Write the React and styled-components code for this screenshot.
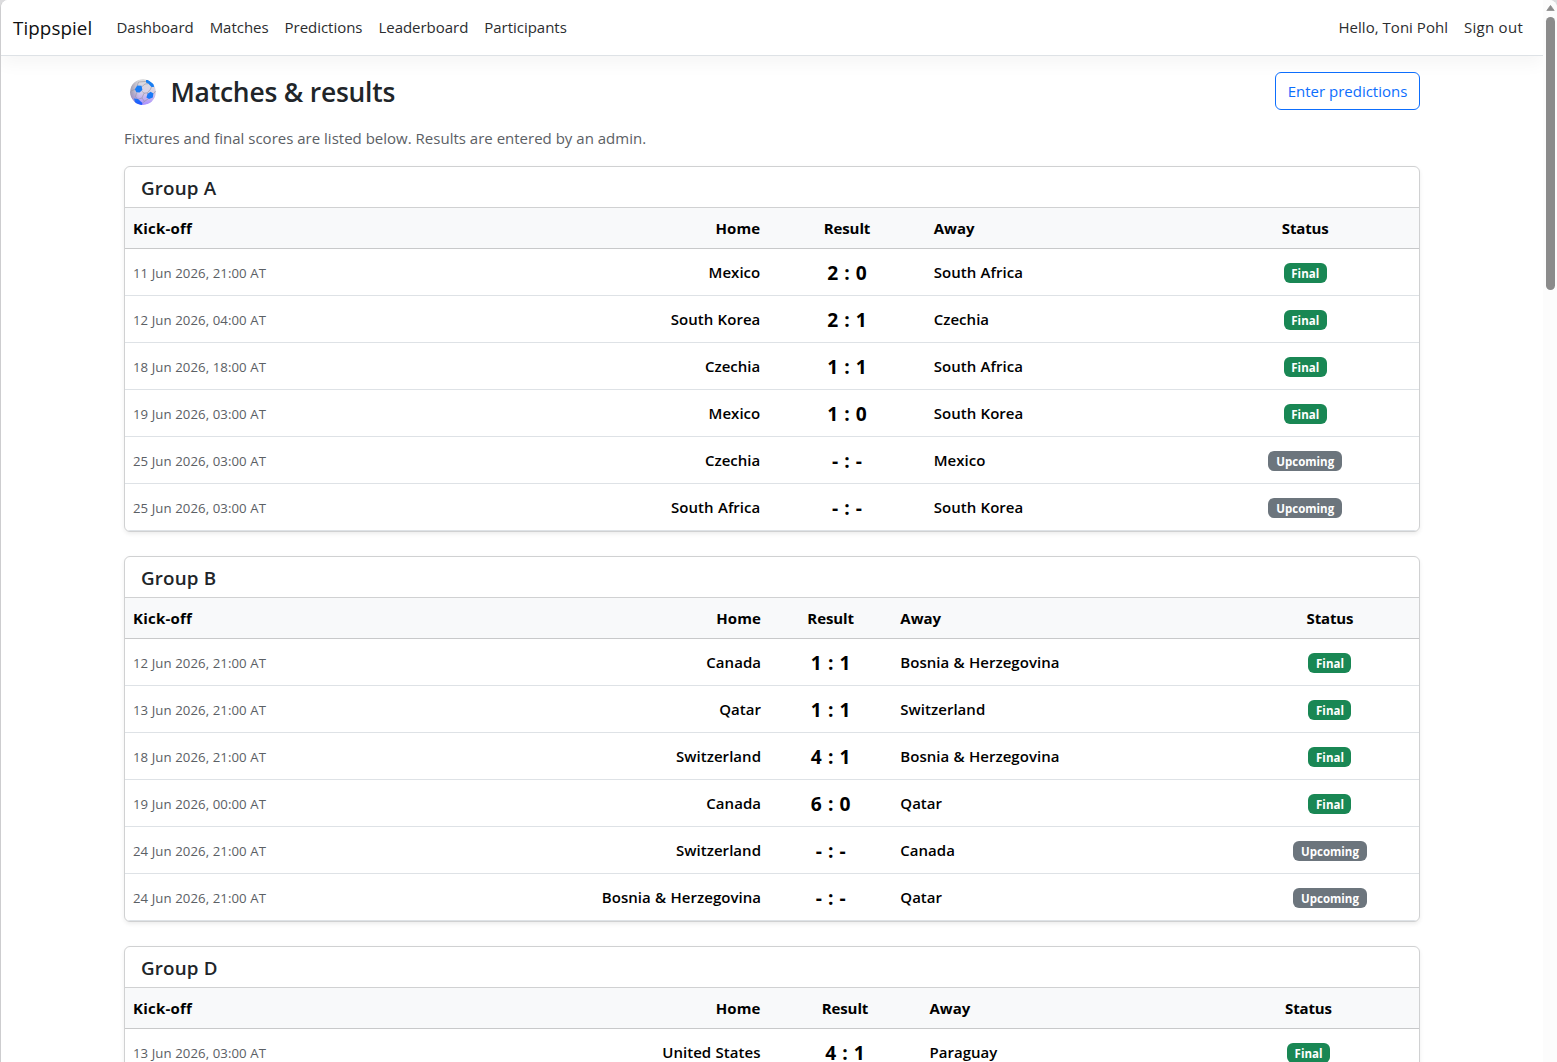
import React from "react";
import styled, { createGlobalStyle } from "styled-components";

const GlobalStyle = createGlobalStyle`
  *, *::before, *::after { box-sizing: border-box; }
  html, body { margin: 0; padding: 0; overflow: hidden; background: #dcdcde; }
  body {
    font-family: "Open Sans", "Noto Sans", sans-serif;
    font-size: 15px;
    line-height: 24px;
    color: #212529;
  }
`;

const Window = styled.div`
  display: flex;
  height: 1062px;
  overflow: hidden;
  background: #fff;
  border-left: 1px solid #cdcdcf;
  border-radius: 8px 8px 0 0;
`;

const Page = styled.div`
  flex: 1;
  min-width: 0;
  height: 1062px;
  overflow: hidden;
`;

const Navbar = styled.nav`
  display: flex;
  align-items: center;
  height: 56px;
  padding: 0 12px 2px;
  background: #fff;
  border-bottom: 1px solid #dee2e6;
  box-shadow: 0 8px 16px rgba(0, 0, 0, 0.04);
`;

const Brand = styled.a`
  margin-right: 16px;
  padding-top: 2px;
  width: 79.5px;
  font-size: 18.8px;
  line-height: 30px;
  letter-spacing: 0.08px;
  color: #0e0f10;
  white-space: nowrap;
`;

const NavLink = styled.a`
  padding: 0 8px;
  color: #2b2d2f;
  letter-spacing: ${(p) => p.$track ?? -0.03}px;
  white-space: nowrap;
`;

const NavEnd = styled.div`
  display: flex;
  margin-left: auto;
`;

const Container = styled.main`
  width: 1296px;
  margin: 16px 0 0 123px;
`;

const TitleBar = styled.div`
  display: flex;
  align-items: center;
  justify-content: space-between;
  height: 38px;
`;

const Title = styled.h1`
  display: flex;
  align-items: center;
  gap: 13.5px;
  margin: 0;
  padding: 1px 0 0 5px;
  font-size: 26.4px;
  line-height: 34px;
  font-weight: 600;
  letter-spacing: -0.2px;
`;

const OutlineButton = styled.button`
  width: 145px;
  height: 38px;
  padding: 0;
  border: 1px solid #0d6efd;
  border-radius: 6px;
  background: #fff;
  color: #0d6efd;
  font: inherit;
  white-space: nowrap;
`;

const Intro = styled.p`
  margin: 16px 0;
  color: #5b6065;
  letter-spacing: 0.005px;
  white-space: nowrap;
`;

const Card = styled.section`
  margin-bottom: 24px;
  background: #fff;
  border: 1px solid #d0d1d2;
  border-radius: 6px;
  box-shadow: 0 2px 4px rgba(0, 0, 0, 0.075);
  overflow: hidden;
`;

const CardTitle = styled.h2`
  height: 41px;
  margin: 0;
  padding: 9px 16px 7px;
  border-bottom: 1px solid #d0d1d2;
  font-size: 18.8px;
  line-height: 25px;
  font-weight: 600;
  letter-spacing: 0.16px;
`;

const Table = styled.table`
  width: 1294px;
  table-layout: fixed;
  border-collapse: separate;
  border-spacing: 0;
  color: #000;
`;

const Col = styled.col`
  width: ${(p) => p.$w}px;
`;

const HeadCell = styled.th`
  height: 41px;
  padding: 0 8px;
  background: #f8f9fa;
  border-bottom: 1px solid #c8c9ca;
  text-align: ${(p) => p.$align || "left"};
  font-weight: 700;
  letter-spacing: ${(p) => p.$track ?? -0.1}px;
`;

const Cell = styled.td`
  height: 47px;
  padding: 0 8px;
  border-bottom: 1px solid #dee2e6;
  text-align: ${(p) => p.$align || "left"};
  white-space: nowrap;
`;

const Kickoff = styled(Cell)`
  padding-top: 1px;
  font-size: 13.2px;
  letter-spacing: 0.08px;
  color: #5b6065;
`;

const Team = styled(Cell)`
  font-weight: 600;
  letter-spacing: 0.03px;
  word-spacing: 0.4px;
`;

const Score = styled(Cell)`
  padding-top: 2px;
  font-size: 19.2px;
  line-height: 24px;
  font-weight: 700;
  word-spacing: 1.1px;
`;

const Badge = styled.span`
  display: block;
  width: ${(p) => (p.$final ? 43 : 74)}px;
  height: 20px;
  margin: 2px auto 0;
  border-radius: 6px;
  background: ${(p) => (p.$final ? "#198754" : "#6c757d")};
  color: #fff;
  font-size: 11.5px;
  line-height: 21px;
  font-weight: 700;
  text-align: center;
`;

const Scrollbar = styled.div`
  display: flex;
  flex-direction: column;
  align-items: center;
  gap: 6px;
  width: 14px;
  padding-top: 5px;
  background: #fcfcfc;
`;

const Thumb = styled.div`
  width: 9px;
  height: 273px;
  border-radius: 5px;
  background: #8b8b8b;
`;

function Ball() {
  return (
    <svg width="28" height="28" viewBox="0 0 28 28" aria-hidden="true">
      <defs>
        <linearGradient id="ballShade" x1="0.55" y1="0" x2="0.5" y2="1">
          <stop offset="0" stopColor="#dcdcdc" />
          <stop offset="0.5" stopColor="#d9d2e6" />
          <stop offset="1" stopColor="#a98dff" />
        </linearGradient>
        <linearGradient id="ballEdge" x1="0" y1="0" x2="1" y2="0">
          <stop offset="0" stopColor="#77758c" stopOpacity="0.6" />
          <stop offset="0.35" stopColor="#77758c" stopOpacity="0" />
        </linearGradient>
        <linearGradient id="ballPatch" x1="0" y1="0" x2="0" y2="28" gradientUnits="userSpaceOnUse">
          <stop offset="0" stopColor="#1a82ee" />
          <stop offset="0.7" stopColor="#1a78f8" />
          <stop offset="1" stopColor="#2450ff" />
        </linearGradient>
        <clipPath id="ballClip">
          <circle cx="14" cy="14" r="13" />
        </clipPath>
      </defs>
      <g clipPath="url(#ballClip)">
        <circle cx="14" cy="14" r="13" fill="url(#ballShade)" />
        <circle cx="14" cy="14" r="13" fill="url(#ballEdge)" />
        <path
          d="M8.2 7.6 L9.5 4 L17 3.4 M13 8.6 L16 6 L19.5 5.6 M13 13.2 L15 15.2 L18.4 14.8 L21.4 11.4 L22.4 9 M18.4 14.8 L18.6 16.2 M15 15.2 L13 20 L15.4 23.4 L19 21 M7.6 14.6 L6.5 18.6 L8.6 21.4 M13 20 L8.6 21.4 M5.8 11.4 L2 13 M15.4 23.4 L13.4 25 M24.4 16 L26.6 13"
          fill="none"
          stroke="#96939f"
          strokeWidth="0.6"
        />
        <g fill="url(#ballPatch)">
          <path d="M8.2 7.6 L12.6 7.8 L13.4 12 L10.6 14.6 L7.4 14.2 L5.8 11.2 Z" />
          <path d="M17 2 L19 2 L24.6 6 L25 9 L22.4 9 L19.5 5.8 L17 4.4 Z" />
          <path d="M18.6 15.8 L21.6 13.8 L24.4 15.6 L23.8 19.6 L20 21 L17.4 19.4 Z" />
          <path d="M5 20.6 L9 21 L13.4 25 L13 28 L7 27 Z" />
        </g>
      </g>
    </svg>
  );
}

const groups = [
  {
    name: "Group A",
    cols: [300, 343.3, 157.4, 265.8, 227.5],
    matches: [
      ["11 Jun 2026, 21:00 AT", "Mexico", "2 : 0", "South Africa"],
      ["12 Jun 2026, 04:00 AT", "South Korea", "2 : 1", "Czechia"],
      ["18 Jun 2026, 18:00 AT", "Czechia", "1 : 1", "South Africa"],
      ["19 Jun 2026, 03:00 AT", "Mexico", "1 : 0", "South Korea"],
      ["25 Jun 2026, 03:00 AT", "Czechia", null, "Mexico"],
      ["25 Jun 2026, 03:00 AT", "South Africa", null, "South Korea"],
    ],
  },
  {
    name: "Group B",
    cols: [300, 344, 123.3, 348.7, 178],
    matches: [
      ["12 Jun 2026, 21:00 AT", "Canada", "1 : 1", "Bosnia & Herzegovina"],
      ["13 Jun 2026, 21:00 AT", "Qatar", "1 : 1", "Switzerland"],
      ["18 Jun 2026, 21:00 AT", "Switzerland", "4 : 1", "Bosnia & Herzegovina"],
      ["19 Jun 2026, 00:00 AT", "Canada", "6 : 0", "Qatar"],
      ["24 Jun 2026, 21:00 AT", "Switzerland", null, "Canada"],
      ["24 Jun 2026, 21:00 AT", "Bosnia & Herzegovina", null, "Qatar"],
    ],
  },
  {
    name: "Group D",
    cols: [300, 343.5, 153, 276.5, 221],
    matches: [["13 Jun 2026, 03:00 AT", "United States", "4 : 1", "Paraguay"]],
  },
];

function GroupCard({ group }) {
  return (
    <Card>
      <CardTitle>{group.name}</CardTitle>
      <Table>
        <colgroup>
          {group.cols.map((w, i) => (
            <Col key={i} $w={w} />
          ))}
        </colgroup>
        <thead>
          <tr>
            <HeadCell $track={0.22}>Kick-off</HeadCell>
            <HeadCell $align="right" $track={0.1}>Home</HeadCell>
            <HeadCell $align="center">Result</HeadCell>
            <HeadCell $track={0}>Away</HeadCell>
            <HeadCell $align="center" $track={-0.15}>Status</HeadCell>
          </tr>
        </thead>
        <tbody>
          {group.matches.map(([time, home, score, away], i) => (
            <tr key={i}>
              <Kickoff>{time}</Kickoff>
              <Team $align="right">{home}</Team>
              <Score $align="center">{score || "- : -"}</Score>
              <Team>{away}</Team>
              <Cell $align="center">
                <Badge $final={!!score}>{score ? "Final" : "Upcoming"}</Badge>
              </Cell>
            </tr>
          ))}
        </tbody>
      </Table>
    </Card>
  );
}

export default function App() {
  return (
    <>
      <GlobalStyle />
      <Window>
        <Page>
          <Navbar>
            <Brand>Tippspiel</Brand>
            <NavLink>Dashboard</NavLink>
            <NavLink>Matches</NavLink>
            <NavLink>Predictions</NavLink>
            <NavLink>Leaderboard</NavLink>
            <NavLink>Participants</NavLink>
            <NavEnd>
              <NavLink $track={0.03}>Hello, Toni Pohl</NavLink>
              <NavLink $track={0.27}>Sign out</NavLink>
            </NavEnd>
          </Navbar>
          <Container>
            <TitleBar>
              <Title>
                <Ball />
                Matches &amp; results
              </Title>
              <OutlineButton>Enter predictions</OutlineButton>
            </TitleBar>
            <Intro>
              Fixtures and final scores are listed below. Results are entered by an admin.
            </Intro>
            {groups.map((g) => (
              <GroupCard key={g.name} group={g} />
            ))}
          </Container>
        </Page>
        <Scrollbar>
          <svg width="9" height="6" viewBox="0 0 9 6" aria-hidden="true">
            <path d="M4.5 0.4 L8.2 5.6 H0.8 Z" fill="#8b8b8b" stroke="#8b8b8b" strokeWidth="0.8" strokeLinejoin="round" />
          </svg>
          <Thumb />
        </Scrollbar>
      </Window>
    </>
  );
}
